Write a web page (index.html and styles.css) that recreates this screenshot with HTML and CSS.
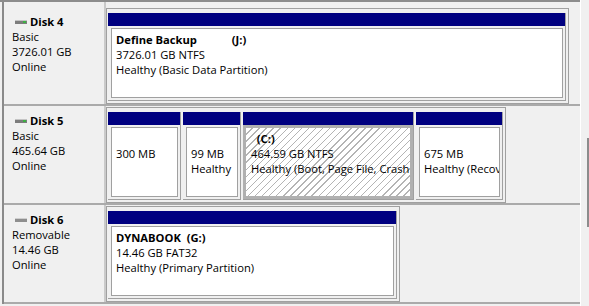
FILE: index.html
```html
<!DOCTYPE html>
<html lang="en">
<head>
    <meta charset="UTF-8">
    <title>Disk Management</title>
    <link rel="stylesheet" href="styles.css">
</head>
<body>
    <div class="screen">
        <div class="view">
            <div class="disks">
                <!-- Disk 4 -->
                <div class="disk disk-first">
                    <div class="disk-info">
                        <div class="disk-name">
                            <svg class="disk-icon" width="12" height="4" viewBox="0 0 12 4"><rect width="12" height="4" fill="#7c7c7c"/><rect width="12" height="1" fill="#c4c4c4"/><rect x="8" y="1" width="3" height="2" fill="#3cb043"/></svg>Disk 4
                        </div>
                        <div>Basic</div>
                        <div>3726.01 GB</div>
                        <div>Online</div>
                    </div>
                    <div class="disk-area">
                        <div class="layout">
                            <div class="part" style="width: 458px;">
                                <div class="part-bar"></div>
                                <div class="part-body">
                                    <div class="part-name">Define Backup            (J:)</div>
                                    <div class="part-line">3726.01 GB NTFS</div>
                                    <div class="part-line">Healthy (Basic Data Partition)</div>
                                </div>
                            </div>
                        </div>
                    </div>
                </div>

                <!-- Disk 5 -->
                <div class="disk">
                    <div class="disk-info">
                        <div class="disk-name">
                            <svg class="disk-icon" width="12" height="4" viewBox="0 0 12 4"><rect width="12" height="4" fill="#7c7c7c"/><rect width="12" height="1" fill="#c4c4c4"/><rect x="8" y="1" width="3" height="2" fill="#3cb043"/></svg>Disk 5
                        </div>
                        <div>Basic</div>
                        <div>465.64 GB</div>
                        <div>Online</div>
                    </div>
                    <div class="disk-area">
                        <div class="layout">
                            <div class="part" style="width: 73px;">
                                <div class="part-bar"></div>
                                <div class="part-body">
                                    <div class="part-name"></div>
                                    <div class="part-line">300 MB</div>
                                </div>
                            </div>
                            <div class="part" style="width: 58px;">
                                <div class="part-bar"></div>
                                <div class="part-body">
                                    <div class="part-name"></div>
                                    <div class="part-line">99 MB</div>
                                    <div class="part-line">Healthy</div>
                                </div>
                            </div>
                            <div class="part" style="width: 171px;">
                                <div class="part-bar"></div>
                                <div class="part-body selected">
                                    <div class="part-name">  (C:)</div>
                                    <div class="part-line">464.59 GB NTFS</div>
                                    <div class="part-line">Healthy (Boot, Page File, Crash Dump, Basic Data Partition)</div>
                                </div>
                            </div>
                            <div class="part" style="width: 87px;">
                                <div class="part-bar"></div>
                                <div class="part-body">
                                    <div class="part-name"></div>
                                    <div class="part-line">675 MB</div>
                                    <div class="part-line">Healthy (Recovery Partition)</div>
                                </div>
                            </div>
                        </div>
                    </div>
                </div>

                <!-- Disk 6 -->
                <div class="disk">
                    <div class="disk-info">
                        <div class="disk-name">
                            <svg class="disk-icon" width="12" height="4" viewBox="0 0 12 4"><rect width="12" height="4" fill="#8e8e8e"/><rect width="12" height="1" fill="#cfcfcf"/></svg>Disk 6
                        </div>
                        <div>Removable</div>
                        <div>14.46 GB</div>
                        <div>Online</div>
                    </div>
                    <div class="disk-area">
                        <div class="layout">
                            <div class="part" style="width: 289px;">
                                <div class="part-bar"></div>
                                <div class="part-body">
                                    <div class="part-name">DYNABOOK  (G:)</div>
                                    <div class="part-line">14.46 GB FAT32</div>
                                    <div class="part-line">Healthy (Primary Partition)</div>
                                </div>
                            </div>
                        </div>
                    </div>
                </div>
            </div>
        </div>
        <div class="vscroll">
            <div class="thumb"></div>
        </div>
    </div>
</body>
</html>
```

FILE: styles.css
```css
body {
    margin: 0;
    background: #f0f0f0;
    font-family: 'Open Sans', 'Noto Sans', sans-serif;
    font-size: 11.2px;
    line-height: 15px;
    color: #000000;
    overflow: hidden;
}
.screen {
    display: flex;
    width: 589px;
    height: 306px;
}
.view {
    width: 580px;
    border-top: 2px solid #8c8c8c;
}
.disks {
    margin-left: 2px;
    border-left: 2px solid #8a8a8a;
}
.disk {
    display: flex;
    height: 97px;
    border-bottom: 2px solid #aaaaaa;
}
.disk-first {
    height: 102px;
}
.disk-info {
    width: 92px;
    padding: 7px 0 0 8px;
    border-right: 2px solid #cacaca;
}
.disk-first .disk-info {
    padding-top: 12px;
}
.disk-name {
    font-weight: bold;
}
.disk-icon {
    display: inline-block;
    vertical-align: middle;
    margin: -2px 3px 0 3px;
}
.disk-area {
    flex: 1;
}

/* the block of partitions for one disk */
.layout {
    display: inline-flex;
    gap: 2px;
    box-sizing: border-box;
    height: 96px;
    margin-top: 1px;
    padding: 4px 2px 2px 1px;
    border: 1px solid #a0a0a0;
}
.disk-first .layout {
    margin-top: 6px;
}
.part {
    display: flex;
    flex-direction: column;
    box-sizing: border-box;
    border-right: 1px solid #a0a0a0;
    border-bottom: 1px solid #a0a0a0;
}
.part-bar {
    height: 13px;
    background: #000080;
}
.part-body {
    flex: 1;
    margin: 2px 2px 2px 3px;
    padding: 3px 4px;
    border: 1px solid #a0a0a0;
    background: #ffffff;
    overflow: hidden;
}
.part-body.selected {
    margin: 0;
    padding: 3px 5px;
    border: 3px solid #b0b0b0;
    background: repeating-linear-gradient(135deg, #ffffff 0 4px, #b4b4b4 4px 5px);
}
.part-name,
.part-line {
    white-space: pre;
}
.part-name {
    font-weight: bold;
    height: 15px;
}
.vscroll {
    width: 8px;
    border-left: 1px solid #ffffff;
}
.thumb {
    width: 2px;
    height: 89px;
    margin: 138px 0 0 6px;
    background: #8c8c8c;
}
```
